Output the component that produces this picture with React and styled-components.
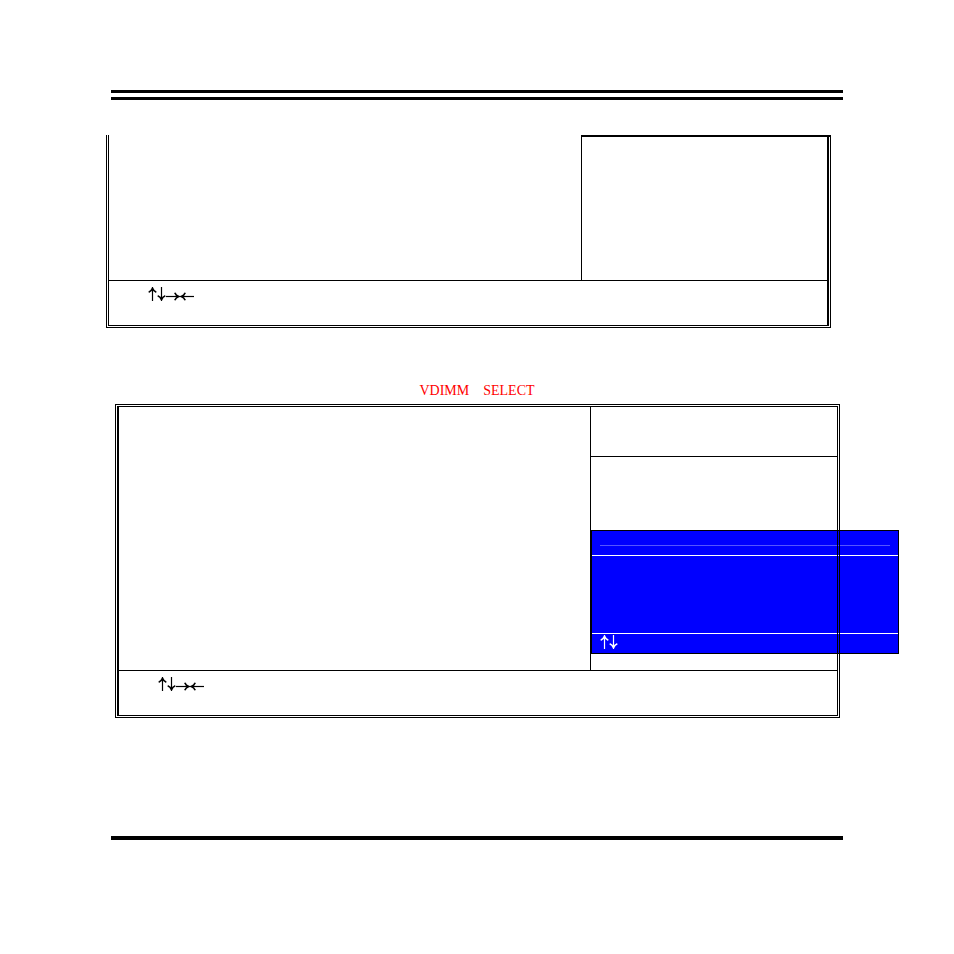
import React from "react";
import styled, { createGlobalStyle } from "styled-components";

const GlobalStyle = createGlobalStyle`
  body {
    margin: 0;
    background-color: #ffffff;
    color: #000000;
    font-family: "Liberation Serif", "Times New Roman", serif;
  }
`;

const Page = styled.main`
  box-sizing: border-box;
  min-height: 100vh;
  padding: 90px 111px;
  isolation: isolate;
`;

const HeaderRule = styled.header`
  height: 4px;
  border-top: 3px solid #000000;
  border-bottom: 3px solid #000000;
`;

const FooterRule = styled.footer`
  height: 4px;
  margin-top: 118px;
  background-color: #000000;
`;

const Screen = styled.section`
  border: 3px double #000000;
  border-top-width: ${(props) => (props.$continued ? "0" : "3px")};
  margin: ${(props) => (props.$continued ? "35px 12px 0 -5px" : "0 3px 0 4px")};
  box-shadow: inset ${(props) => (props.$continued ? "-1px" : "1px")} 0 0 #000000;
`;

const Columns = styled.div`
  display: flex;
  min-height: ${(props) => (props.$tall ? "263px" : "145px")};
`;

const Settings = styled.div`
  flex: 1;
`;

const HelpPane = styled.aside`
  display: flex;
  flex-direction: column;
  box-sizing: border-box;
  width: 247px;
  border-left: 1px solid #000000;
`;

/* The top edge runs over the outer frame of the screen */
const ContinuedPane = styled(HelpPane)`
  width: 250px;
  margin-right: -3px;
  border-top: 2px solid #000000;
`;

const HelpTitle = styled.div`
  height: 49px;
  border-bottom: 1px solid #000000;
`;

const HelpBody = styled.div`
  flex: 1;
  position: relative;
`;

const KeyBar = styled.div`
  box-sizing: border-box;
  height: 45px;
  padding: 6px ${(props) => (props.$wide ? "40px" : "39px")};
  border-top: 1px solid #000000;
`;

const Keys = styled.div`
  display: flex;
`;

const ArrowIcon = styled.svg`
  display: block;
  fill: none;
  stroke: currentColor;
`;

const Title = styled.h2`
  margin: 56px 0 0;
  color: #ff0000;
  font-size: 14px;
  font-weight: 400;
  line-height: 14px;
  height: 20px;
  display: flex;
  justify-content: center;
  gap: 14px;
`;

/* Sits under the frame lines, which stay visible across it */
const Popup = styled.div`
  position: absolute;
  z-index: -1;
  top: 73px;
  left: 0;
  box-sizing: border-box;
  width: 308px;
  border: 1px solid #000000;
  background-color: #0000ff;
  color: #ffffff;
`;

const PopupHeader = styled.div`
  box-sizing: border-box;
  height: 25px;
  padding: 14px 8px 0;
  border-bottom: 1px solid #ffffff;
`;

const Divider = styled.hr`
  height: 1px;
  margin: 0;
  border: 0;
  background-color: #5555ff;
`;

const PopupBody = styled.div`
  height: 77px;
`;

const PopupKeys = styled.div`
  box-sizing: border-box;
  height: 20px;
  padding: 1px 8px;
  border-top: 1px solid #ffffff;
`;

const arrows = {
  up: {
    width: 9,
    shaft: "M4.5 1.5V14",
    head: "M0.7 5.2Q3.4 4.2 4.5 1.2Q5.6 4.2 8.3 5.2",
  },
  down: {
    width: 9,
    shaft: "M4.5 0V12.5",
    head: "M0.7 8.8Q3.4 9.8 4.5 12.8Q5.6 9.8 8.3 8.8",
  },
  right: {
    width: 14,
    shaft: "M0 9.5H12",
    head: "M8.8 5.7Q9.8 8.4 12.8 9.5Q9.8 10.6 8.8 13.3",
  },
  left: {
    width: 14,
    shaft: "M2 9.5H14",
    head: "M5.2 5.7Q4.2 8.4 1.2 9.5Q4.2 10.6 5.2 13.3",
  },
};

const Arrow = ({ direction }) => {
  const { width, shaft, head } = arrows[direction];
  return (
    <ArrowIcon
      width={width}
      height="14"
      viewBox={`0 0 ${width} 14`}
      role="img"
      aria-label={direction}
    >
      <path d={shaft} strokeWidth="1.2" />
      <path d={head} strokeWidth="1.7" />
    </ArrowIcon>
  );
};

const ArrowKeys = ({ directions }) => (
  <Keys>
    {directions.map((direction) => (
      <Arrow key={direction} direction={direction} />
    ))}
  </Keys>
);

const App = () => {
  return (
    <>
      <GlobalStyle />
      <Page>
        <HeaderRule />
        <Screen $continued>
          <Columns>
            <Settings />
            <ContinuedPane />
          </Columns>
          <KeyBar>
            <ArrowKeys directions={["up", "down", "right", "left"]} />
          </KeyBar>
        </Screen>
        <Title>
          <span>VDIMM</span>
          <span>SELECT</span>
        </Title>
        <Screen>
          <Columns $tall>
            <Settings />
            <HelpPane>
              <HelpTitle />
              <HelpBody>
                <Popup>
                  <PopupHeader>
                    <Divider />
                  </PopupHeader>
                  <PopupBody />
                  <PopupKeys>
                    <ArrowKeys directions={["up", "down"]} />
                  </PopupKeys>
                </Popup>
              </HelpBody>
            </HelpPane>
          </Columns>
          <KeyBar $wide>
            <ArrowKeys directions={["up", "down", "right", "left"]} />
          </KeyBar>
        </Screen>
        <FooterRule />
      </Page>
    </>
  );
};

export default App;
